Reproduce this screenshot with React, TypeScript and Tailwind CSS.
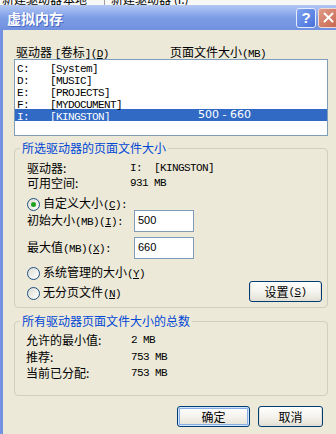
import React from "react";

// ASCII part of the labels, looks like the narrow SimSun latin
function M({ children }: { children: React.ReactNode }) {
  return (
    <span className="font-['Liberation_Mono',monospace] text-[11px] tracking-[-0.6px]">
      {children}
    </span>
  );
}

// accelerator key, e.g. (D)
function Acc({ k }: { k: string }) {
  return (
    <M>
      (<span className="underline underline-offset-1">{k}</span>)
    </M>
  );
}

function Radio({ checked }: { checked?: boolean }) {
  return (
    <span className="w-[13px] h-[13px] rounded-full border border-[#1C5180] bg-gradient-to-br from-[#DCDCD4] to-white flex items-center justify-center shrink-0">
      {checked && <span className="w-[5px] h-[5px] rounded-full bg-[#21A121]" />}
    </span>
  );
}

function XpButton({
  children,
  isDefault,
  width,
}: {
  children: React.ReactNode;
  isDefault?: boolean;
  width: string;
}) {
  return (
    <button
      className={`${width} h-[21px] rounded-[3px] border border-[#003C74] bg-gradient-to-b from-white via-[#F4F3EE] to-[#E3E1D6] text-[12px] leading-[12px] text-black flex items-center justify-center ${
        isDefault
          ? "shadow-[inset_0_0_0_1px_#CEE7FF,inset_0_0_0_2px_#89ADE4]"
          : "shadow-[inset_0_-1px_0_1px_#E3E1D6]"
      }`}
    >
      {children}
    </button>
  );
}

const drives = [
  { letter: "C:", label: "[System]", size: "" },
  { letter: "D:", label: "[MUSIC]", size: "" },
  { letter: "E:", label: "[PROJECTS]", size: "" },
  { letter: "F:", label: "[MYDOCUMENT]", size: "" },
  { letter: "I:", label: "[KINGSTON]", size: "500 - 660" },
];

const totals = [
  { name: "允许的最小值:", value: "2 MB" },
  { name: "推荐:", value: "753 MB" },
  { name: "当前已分配:", value: "753 MB" },
];

export default function App() {
  return (
    <div className="w-[336px] h-[434px] overflow-hidden bg-[#ECE9D8] text-black text-[12px] font-['Noto_Sans_CJK_SC',sans-serif] flex flex-col">
      {/* bit of the window behind */}
      <div className="h-[5px] shrink-0 overflow-hidden bg-[#F7F7F5] flex text-[12px] leading-[12px]">
        <div className="-mt-[7px] w-[55px] pl-[2px] border-r border-[#A0A0A0] whitespace-nowrap">新建驱动器</div>
        <div className="-mt-[7px] w-[50px] pl-[8px] border-r border-[#A0A0A0] whitespace-nowrap">本地</div>
        <div className="-mt-[7px] pl-[6px] whitespace-nowrap">新建驱动器 (I:)</div>
      </div>

      {/* title bar */}
      <div className="h-[25px] shrink-0 flex items-center bg-gradient-to-b from-[#B5C9F4] via-[#7E9DE6] to-[#7090E0] pl-[7px]">
        <span className="text-white font-bold text-[14px] leading-[14px] [text-shadow:1px_1px_0_#4A69C4]">
          虚拟内存
        </span>
        <div className="ml-auto w-[20px] h-[20px] rounded-[3px] border border-[#E4EBFA] bg-gradient-to-br from-[#7FA2EE] to-[#4670DA] flex items-center justify-center text-white font-bold text-[15px] leading-[15px] font-['Liberation_Sans',sans-serif]">
          ?
        </div>
        <div className="ml-[2px] -mr-[3px] w-[21px] h-[20px] shrink-0 rounded-[3px] border border-[#F0DAD4] bg-gradient-to-br from-[#E09A88] to-[#C7654D] flex items-center justify-center">
          <svg width="11" height="11" viewBox="0 0 11 11">
            <path d="M1.5 1.5 L9.5 9.5 M9.5 1.5 L1.5 9.5" stroke="white" strokeWidth="2" strokeLinecap="round" />
          </svg>
        </div>
      </div>

      {/* body */}
      <div className="flex flex-1">
        <div className="w-[3px] shrink-0 bg-[#7491E2]" />
        <div className="flex-1 flex flex-col pl-[11px] pr-[8px]">
          <div className="mt-[16px] h-[12px] leading-[12px] flex whitespace-nowrap">
            <div className="pl-[2px] w-[156px]">
              驱动器 <M>[</M>卷标<M>]</M>
              <Acc k="D" />
            </div>
            <div>
              页面文件大小<M>(MB)</M>
            </div>
          </div>

          {/* drive list */}
          <div className="mt-[1px] h-[77px] border border-[#7F9DB9] bg-white pt-[1px]">
            {drives.map((d) => (
              <div
                key={d.letter}
                className={`h-[12px] leading-[12px] flex pl-[2px] whitespace-nowrap ${
                  d.size ? "bg-[#316AC5] text-white" : ""
                }`}
              >
                <div className="w-[33px]">
                  <M>{d.letter}</M>
                </div>
                <div className="w-[148px]">
                  <M>{d.label}</M>
                </div>
                <div className="font-['DejaVu_Sans',sans-serif] text-[11px]">{d.size}</div>
              </div>
            ))}
          </div>

          {/* selected drive */}
          <fieldset className="mt-[6px] border border-[#D0D0BF] rounded-[4px]">
            <legend className="ml-[5px] px-[2px] h-[12px] leading-[12px] text-[#0046D5]">
              所选驱动器的页面文件大小
            </legend>
            <div className="pl-[12px] pr-[5px] pb-[6px] flex flex-col">
              <div className="mt-[8px] h-[12px] leading-[12px] flex">
                <div className="w-[103px]">驱动器:</div>
                <M>
                  <span className="whitespace-pre">I:  [KINGSTON]</span>
                </M>
              </div>
              <div className="mt-[3px] h-[12px] leading-[12px] flex">
                <div className="w-[103px]">可用空间:</div>
                <M>931 MB</M>
              </div>
              <div className="mt-[9px] h-[12px] leading-[12px] flex items-center gap-[3px]">
                <Radio checked />
                <span>
                  自定义大小
                  <Acc k="C" />
                  <M>:</M>
                </span>
              </div>
              <div className="h-[22px] flex items-center">
                <div className="w-[107px] leading-[12px]">
                  初始大小<M>(MB)</M>
                  <Acc k="I" />
                  <M>:</M>
                </div>
                <div className="w-[60px] h-[22px] border border-[#7F9DB9] bg-white pl-[3px] pt-[3px] text-[11px] leading-[13px] font-['Liberation_Sans',sans-serif]">
                  500
                </div>
              </div>
              <div className="mt-[5px] h-[22px] flex items-center">
                <div className="w-[107px] leading-[12px]">
                  最大值<M>(MB)</M>
                  <Acc k="X" />
                  <M>:</M>
                </div>
                <div className="w-[60px] h-[22px] border border-[#7F9DB9] bg-white pl-[3px] pt-[3px] text-[11px] leading-[13px] font-['Liberation_Sans',sans-serif]">
                  660
                </div>
              </div>
              <div className="mt-[8px] h-[12px] leading-[12px] flex items-center gap-[3px]">
                <Radio />
                <span>
                  系统管理的大小
                  <Acc k="Y" />
                </span>
              </div>
              <div className="mt-[2px] h-[20px] flex">
                <div className="self-end mb-[2px] h-[12px] leading-[12px] flex items-center gap-[3px]">
                  <Radio />
                  <span>
                    无分页文件
                    <Acc k="N" />
                  </span>
                </div>
                <div className="ml-auto">
                  <XpButton width="w-[73px]">
                    设置
                    <Acc k="S" />
                  </XpButton>
                </div>
              </div>
            </div>
          </fieldset>

          {/* totals */}
          <fieldset className="mt-[7px] border border-[#D0D0BF] rounded-[4px]">
            <legend className="ml-[5px] px-[2px] h-[12px] leading-[12px] text-[#0046D5]">
              所有驱动器页面文件大小的总数
            </legend>
            <div className="pl-[11px] pb-[16px] flex flex-col">
              {totals.map((t, i) => (
                <div
                  key={t.name}
                  className={`h-[12px] leading-[12px] flex ${
                    i === 0 ? "mt-[7px]" : i === 1 ? "mt-[5px]" : "mt-[4px]"
                  }`}
                >
                  <div className="w-[105px]">{t.name}</div>
                  <M>{t.value}</M>
                </div>
              ))}
            </div>
          </fieldset>

          <div className="mt-[10px] flex justify-end gap-[8px] pr-[5px]">
            <XpButton width="w-[73px]" isDefault>
              确定
            </XpButton>
            <XpButton width="w-[65px]">取消</XpButton>
          </div>
        </div>
      </div>
    </div>
  );
}
